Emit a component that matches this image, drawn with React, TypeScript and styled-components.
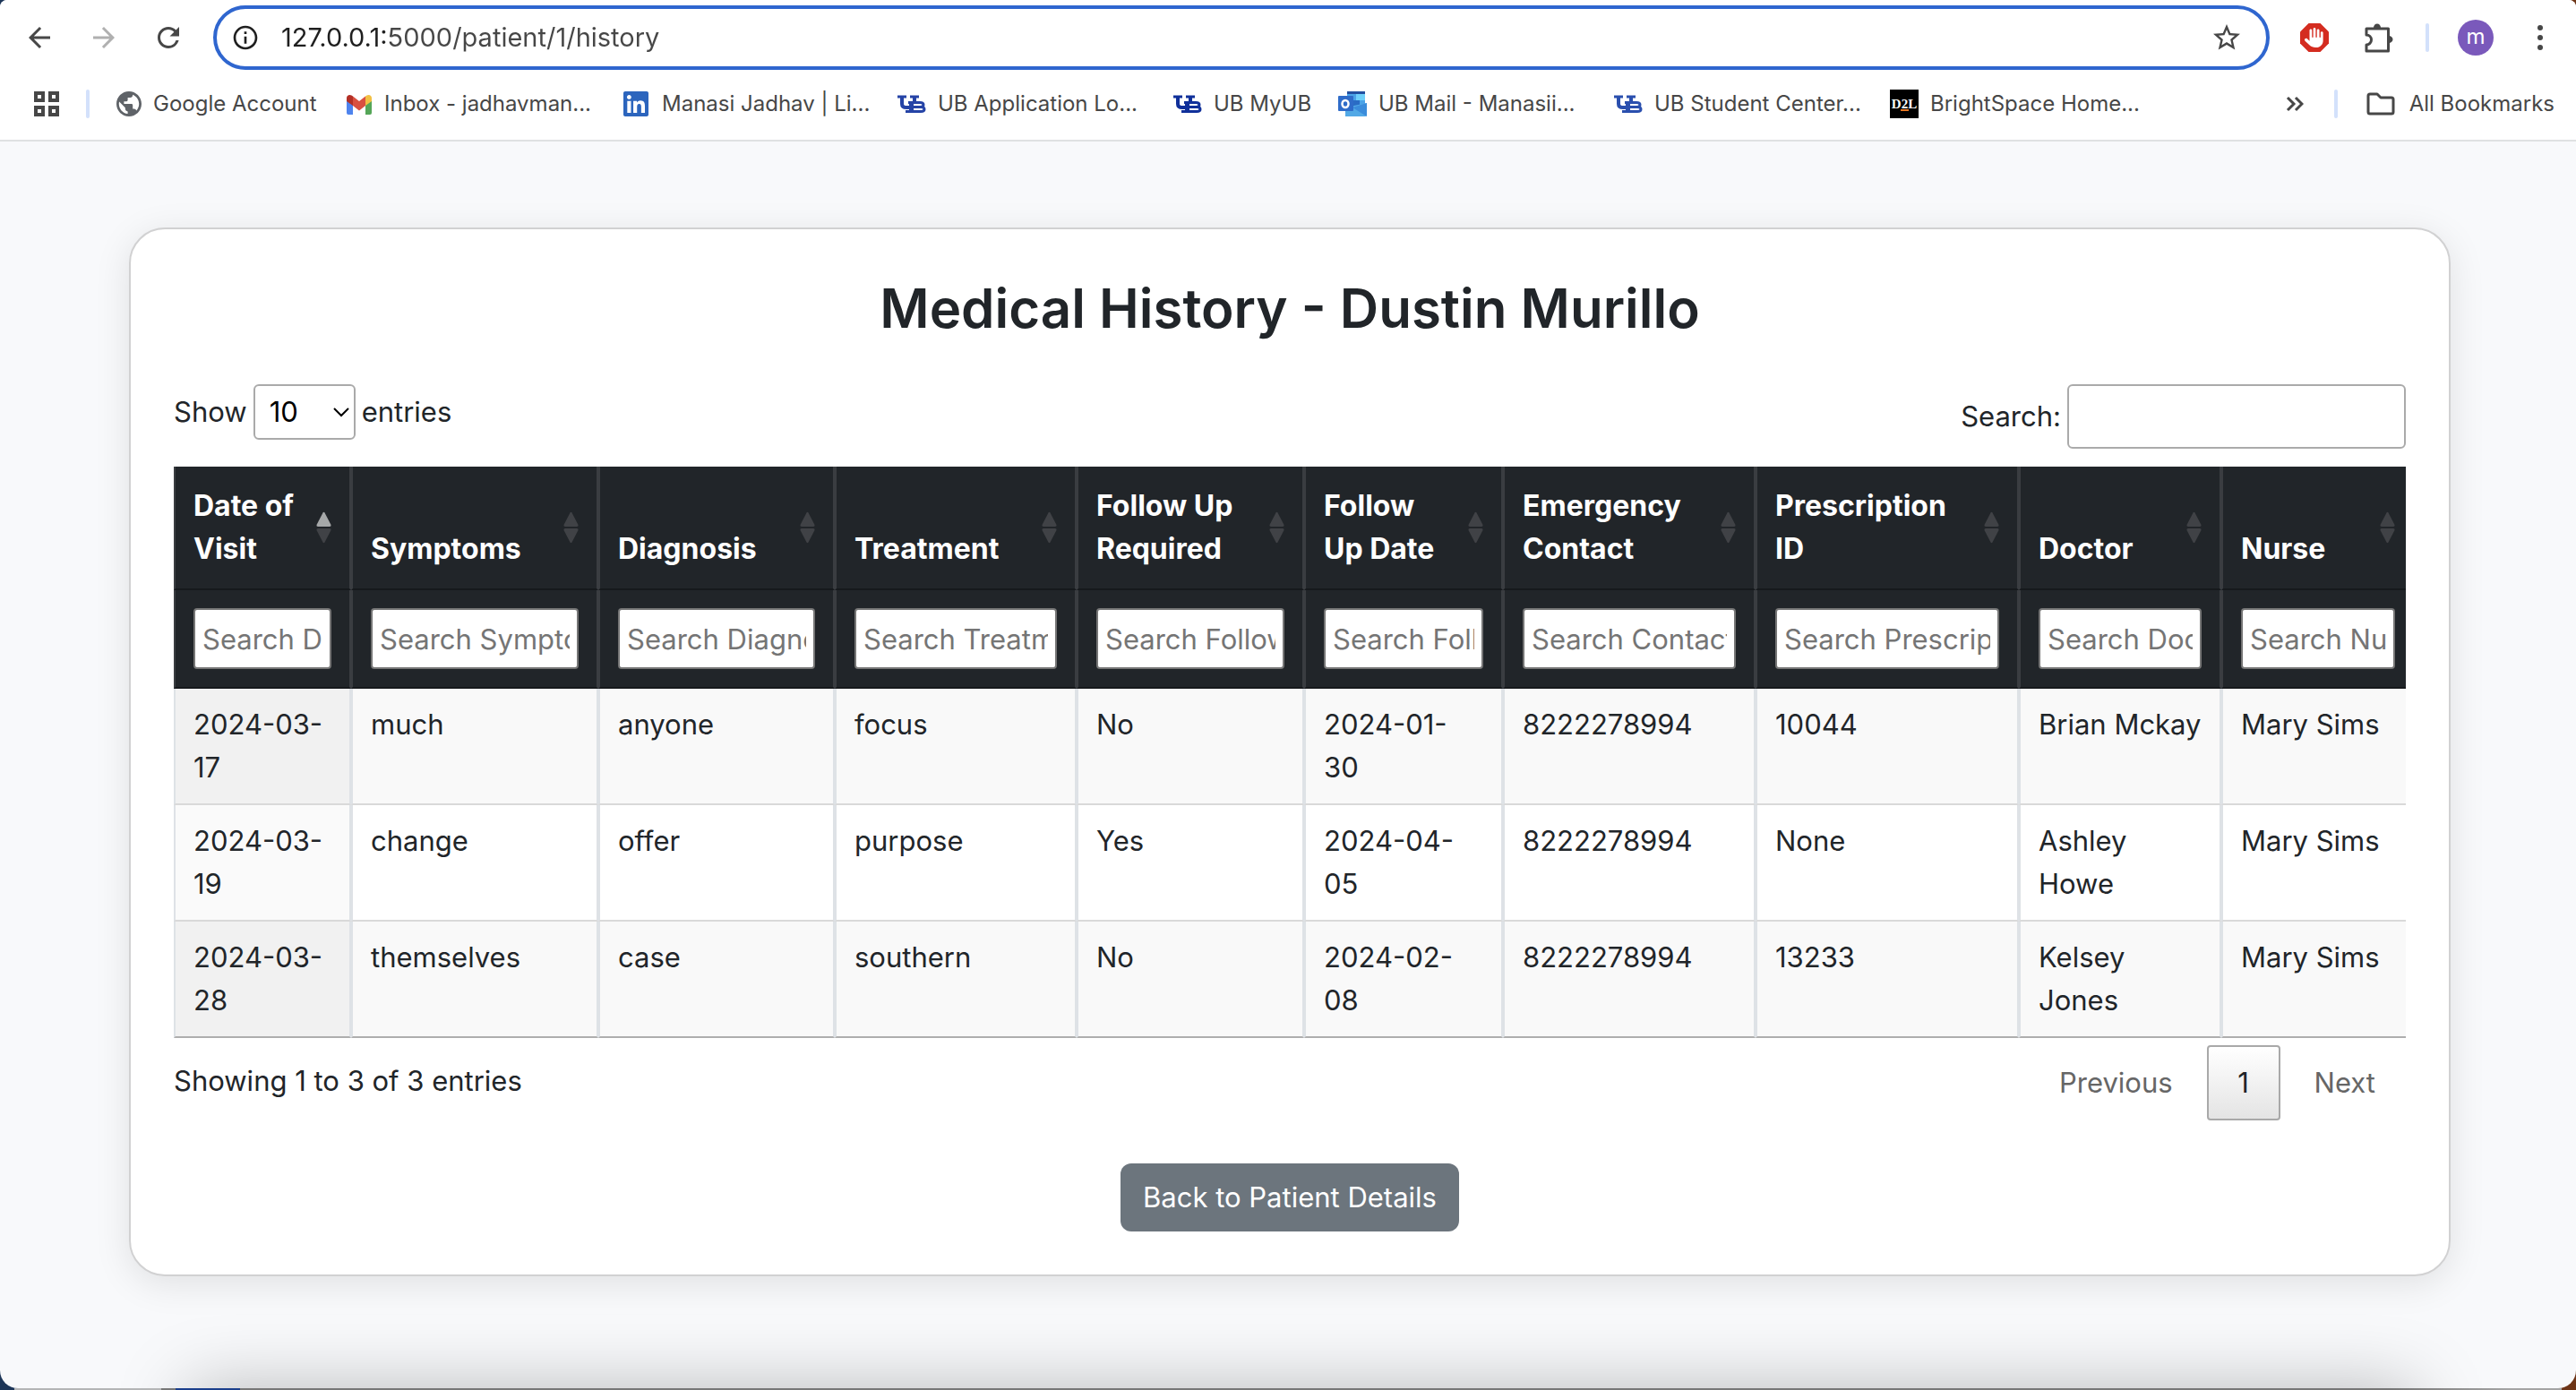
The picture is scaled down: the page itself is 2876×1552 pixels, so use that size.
import React, { useState } from "react";
import styled, { createGlobalStyle, css } from "styled-components";
import { FaHand, FaLinkedin } from "react-icons/fa6";
import {
  MdArrowBack,
  MdArrowForward,
  MdInfoOutline,
  MdPublic,
  MdRefresh,
  MdStarBorder,
} from "react-icons/md";

const GlobalStyle = createGlobalStyle`
  *, *::before, *::after { box-sizing: border-box; }
  body {
    margin: 0;
    background: linear-gradient(to right, #1d3658 50%, #6e3517 50%);
    color: #212529;
    font-family: Inter, "Liberation Sans", sans-serif;
    font-size: 31px;
    line-height: 48px;
  }
  button, input, select { font: inherit; color: inherit; margin: 0; }
  button { cursor: pointer; }
`;

const Desktop = styled.div`
  min-height: 100vh;
  display: flex;
  flex-direction: column;
`;

const BrowserWindow = styled.div`
  flex: 1;
  display: flex;
  flex-direction: column;
  overflow: hidden;
  background: #f8f9fb;
  border-radius: 8px 8px 20px 20px;
`;

const DesktopEdge = styled.div`
  height: 2px;
  margin: 0 16px;
  background: linear-gradient(
    to right,
    #b4b5b6 0 164px,
    #777 164px 180px,
    #1b3f8c 180px 252px,
    #777 252px calc(100% - 190px),
    #a4a4a4 calc(100% - 60px)
  );
`;

/* ---------- Browser chrome ---------- */

const Chrome = styled.header`
  background: #fff;
  border-bottom: 2px solid #dfe1e2;
  color: #474747;
`;

const Toolbar = styled.div`
  display: flex;
  align-items: center;
  height: 84px;
  padding: 0 20px 0 24px;
`;

const IconButton = styled.button<{ $width?: number; $faded?: boolean }>`
  display: flex;
  align-items: center;
  justify-content: center;
  flex: none;
  width: ${(p) => p.$width ?? 40}px;
  height: 40px;
  padding: 0;
  border: 0;
  background: none;
  color: ${(p) => (p.$faded ? "#b0b0b0" : "#474747")};
`;

const NavButtons = styled.nav`
  display: flex;
  gap: 32px;
  margin-right: 30px;
`;

const AddressBar = styled.div`
  flex: 1;
  display: flex;
  align-items: center;
  height: 72px;
  padding: 0 24px 0 16px;
  border: 4px solid #2f66cf;
  border-radius: 36px;
  color: #1f1f1f;
`;

const AddressInput = styled.input`
  flex: 1;
  min-width: 0;
  height: 40px;
  margin-left: 24px;
  padding: 0;
  border: 0;
  outline: 0;
  font-size: 29px;
  line-height: 40px;
  color: transparent;
  background: linear-gradient(to right, #1f1f1f 122px, #474747 122px);
  background-clip: text;
  -webkit-background-clip: text;
`;

const Extensions = styled.div`
  display: flex;
  align-items: center;
  gap: 32px;
  margin-left: 30px;
`;

const Divider = styled.span`
  flex: none;
  width: 4px;
  height: 32px;
  border-radius: 2px;
  background: #d3e1fb;
`;

const Avatar = styled.button`
  flex: none;
  width: 40px;
  height: 40px;
  padding: 0 0 2px;
  border: 0;
  border-radius: 50%;
  background: #7a59bb;
  color: #fff;
  font-size: 24px;
  line-height: 36px;
`;

const BookmarksBar = styled.nav`
  display: flex;
  align-items: center;
  height: 72px;
  padding: 0 24px 8px 38px;
`;

const AppsGroup = styled.div`
  display: flex;
  align-items: center;
  gap: 30px;
`;

const BookmarkList = styled.ul`
  display: flex;
  flex: 1;
  gap: 8px;
  margin: 0 0 0 30px;
  padding: 0;
  list-style: none;
`;

const BookmarkItem = styled.li<{ $width: number }>`
  flex: 0 0 ${(p) => p.$width}px;
`;

const BookmarkLink = styled.a`
  display: flex;
  align-items: center;
  gap: 13px;
  color: #474747;
  font-size: 24px;
  line-height: 32px;
  text-decoration: none;
  white-space: nowrap;

  svg { flex: none; }
`;

const AllBookmarks = styled.button`
  display: flex;
  align-items: center;
  gap: 16px;
  margin-left: 32px;
  padding: 0;
  border: 0;
  background: none;
  font-size: 24px;
  line-height: 32px;
  white-space: nowrap;
`;

/* ---------- Page ---------- */

const Page = styled.main`
  flex: 1;
  display: flex;
  flex-direction: column;
  padding: 96px 140px 0 144px;
`;

const Card = styled.section`
  padding: 48px;
  border: 2px solid #d1d1d2;
  border-radius: 40px;
  background: #fff;
  box-shadow: 0 8px 40px rgba(0, 0, 0, 0.1);
`;

const Title = styled.h1`
  margin: 0 0 45px;
  font-size: 60px;
  font-weight: 600;
  line-height: 80px;
  text-align: center;
`;

const Controls = styled.div`
  display: flex;
  justify-content: space-between;
  align-items: flex-start;
  margin-bottom: 20px;
`;

const ControlLabel = styled.label`
  display: flex;
  align-items: center;
  gap: 7px;
`;

const SelectBox = styled.span`
  position: relative;
  display: block;

  svg {
    position: absolute;
    right: 7px;
    top: 24px;
    pointer-events: none;
  }
`;

const LengthSelect = styled.select`
  display: block;
  appearance: none;
  width: 114px;
  height: 62px;
  padding: 0 16px;
  border: 2px solid #aaa;
  border-radius: 6px;
  background: transparent;
  color: #000;
`;

const SearchInput = styled.input`
  width: 378px;
  height: 72px;
  padding: 10px;
  border: 2px solid #aaa;
  border-radius: 6px;
  background: transparent;
`;

const TableClip = styled.div`
  overflow: hidden;
`;

const HistoryTable = styled.table`
  width: calc(100% + 10px);
  table-layout: fixed;
  border-collapse: separate;
  border-spacing: 0;
`;

const HeaderCell = styled.th`
  padding: 20px;
  border: 0 solid #3a3d41;
  border-width: 0 2px;
  border-bottom: 2px solid #16191c;
  background: #212529;
  color: #fff;
  font-size: 32px;
  font-weight: 700;
  text-align: left;
  vertical-align: bottom;
`;

const FilterCell = styled.td`
  padding: 20px;
  border: 0 solid #3a3d41;
  border-width: 0 2px;
  border-bottom: 2px solid #16191c;
  background: #212529;
`;

const SortButton = styled.button`
  display: flex;
  align-items: flex-end;
  justify-content: space-between;
  gap: 16px;
  width: 100%;
  height: 96px;
  padding: 0;
  border: 0;
  background: none;
  text-align: left;

  svg {
    flex: none;
    align-self: center;
  }
`;

const FilterInput = styled.input`
  display: block;
  width: 100%;
  height: 68px;
  padding: 0 8px;
  border: 2px solid #767676;
  border-radius: 4px;
  background: #fff;
  color: #212529;

  &::placeholder { color: #757575; opacity: 1; }
`;

const DataCell = styled.td<{ $striped: boolean; $sorted: boolean; $last: boolean }>`
  padding: 16px 18px 16px 20px;
  border: 0 solid #dee2e6;
  border-width: 0 2px;
  border-bottom: 2px solid ${(p) => (p.$last ? "#aeaeae" : "#d9d9d9")};
  vertical-align: top;
  ${(p) =>
    p.$striped
      ? css`background: ${p.$sorted ? "#f1f1f1" : "#f9f9f9"};`
      : css`background: ${p.$sorted ? "#fafafa" : "#fff"};`}
`;

const DateValue = styled.time`
  display: block;
  max-width: 160px;
`;

const TableFooter = styled.div`
  display: flex;
  justify-content: space-between;
  align-items: flex-start;
  padding-top: 8px;
`;

const Info = styled.p`
  margin: 0;
  padding-top: 16px;
`;

const Pagination = styled.nav`
  display: flex;
  gap: 4px;
`;

const PageButton = styled.button<{ $current?: boolean }>`
  height: 84px;
  padding: 0 32px;
  border: 2px solid transparent;
  border-radius: 4px;
  background: transparent;
  color: #666;
  ${(p) =>
    p.$current &&
    css`
      width: 82px;
      padding: 0;
      border-color: #a9a9a9;
      background: linear-gradient(to bottom, #fff, #e4e4e4);
      color: #212529;
    `}
`;

const Actions = styled.div`
  display: flex;
  justify-content: center;
  padding-top: 48px;
`;

const BackLink = styled.a`
  padding: 14px 25px;
  border-radius: 12px;
  background: #6c757d;
  color: #fff;
  text-decoration: none;
`;

const BottomShade = styled.div`
  flex: none;
  height: 200px;
  margin: 0 180px -200px 210px;
  box-shadow: 0 0 80px rgba(0, 0, 0, 0.26);
`;

/* ---------- Icons ---------- */

const AppsIcon = () => (
  <svg width="28" height="28" viewBox="0 0 28 28" fill="none" stroke="currentColor" strokeWidth="4">
    <rect x="2" y="2" width="8" height="8" />
    <rect x="18" y="2" width="8" height="8" />
    <rect x="2" y="18" width="8" height="8" />
    <rect x="18" y="18" width="8" height="8" />
  </svg>
);

const GmailIcon = () => (
  <svg width="30" height="28" viewBox="0 0 30 28">
    <path d="M1 8v16a2 2 0 0 0 2 2h5V12z" fill="#4f84ee" />
    <path d="M29 8v16a2 2 0 0 1-2 2h-5V12z" fill="#55a658" />
    <path d="M22 5.500l1.500-1C26 3 29 4.500 29 7.500V11l-7 5z" fill="#f2c043" />
    <path d="M8 5.500L6.500 4.500C4 3 1 4.500 1 7.500V11l7 5z" fill="#b33026" />
    <path d="M8 5.500l7 5.500 7-5.500V16l-7 5.500L8 16z" fill="#d95040" />
  </svg>
);

/* University monogram: two interlocking slab shapes */
const UbIcon = ({ color = "#10309a" }: { color?: string }) => (
  <svg width="32" height="24" viewBox="0 0 32 24" fill="none" stroke={color}>
    <path d="M0 4h10M14 4h10" strokeWidth="3" />
    <path d="M5 4v8q0 4 5 4h5q4 0 4-4V4" strokeWidth="4" />
    <path d="M13 9h13q6 0 5 4.500Q33 22 26 22H9v-3h4z" fill="#fff" stroke="none" />
    <path d="M9 20.500h17q4 0 4-2.500t-4-2.500h-9M12 10.500h13q4 0 4 2.500t-4 2.500" strokeWidth="3" />
    <path d="M15.500 10v11" strokeWidth="5" />
    <path d="M19 3v7" strokeWidth="4" />
  </svg>
);

const OutlookIcon = () => (
  <svg width="32" height="28" viewBox="0 0 32 28">
    <path d="M10 0h20v8H10z" fill="#2350a0" />
    <path d="M10 3h20v16H10z" fill="#4aa3e8" />
    <path d="M20 3h10v7H20z" fill="#6fd0fa" />
    <path d="M16 10h8v9h-8z" fill="#2a6cc4" />
    <path d="M8 18L32 13v13a2 2 0 0 1-2 2H8z" fill="#52a9e6" />
    <path d="M32 13v15L16 18z" fill="#3b8cdb" />
    <rect x="0" y="5" width="17" height="17" rx="1" fill="#2f6cc9" />
    <ellipse cx="8" cy="14" rx="3.500" ry="4" fill="none" stroke="#fff" strokeWidth="2.500" />
  </svg>
);

const D2lIcon = () => (
  <svg width="32" height="32" viewBox="0 0 32 32" fontFamily="Liberation Serif, serif" fontWeight="700" fontSize="15" fill="#fff">
    <rect width="32" height="32" fill="#000" />
    <text x="16" y="21" textAnchor="middle">D2L</text>
    <rect x="12" y="22" width="9" height="2" fill="#e87722" />
  </svg>
);

const AdBlockIcon = () => (
  <svg width="32" height="32" viewBox="0 0 32 32">
    <path d="M9.500 0h13L32 9.500v13L22.500 32h-13L0 22.500v-13z" fill="#d42c20" />
    <FaHand x={5} y={5} size={22} color="#fff" />
  </svg>
);

const PuzzleIcon = () => (
  <svg width="36" height="36" viewBox="0 0 36 36" fill="none" stroke="currentColor" strokeWidth="3" strokeLinejoin="round">
    <path d="M4 8h24.500v25H4v-7a5.500 5.500 0 0 0 0-11z" />
    <path d="M12 7a4 4.500 0 0 1 8 0zM29 16a4.500 4 0 0 1 0 8z" fill="currentColor" stroke="none" />
  </svg>
);

const MenuIcon = () => (
  <svg width="8" height="28" viewBox="0 0 8 28" fill="currentColor">
    <circle cx="4" cy="3" r="3" />
    <circle cx="4" cy="14" r="3" />
    <circle cx="4" cy="25" r="3" />
  </svg>
);

const MoreIcon = () => (
  <svg width="20" height="18" viewBox="0 0 20 18" fill="none" stroke="currentColor" strokeWidth="3">
    <path d="M2 2l7 7-7 7M11 2l7 7-7 7" />
  </svg>
);

const FolderIcon = () => (
  <svg width="32" height="26" viewBox="0 0 32 26" fill="none" stroke="currentColor" strokeWidth="3" strokeLinejoin="round">
    <path d="M2 4a2 2 0 0 1 2-2h8l4 4h12a2 2 0 0 1 2 2v14a2 2 0 0 1-2 2H4a2 2 0 0 1-2-2z" />
  </svg>
);

const SelectChevron = () => (
  <svg width="18" height="14" viewBox="0 0 18 14" fill="none" stroke="#000" strokeWidth="2">
    <path d="M1 3l8 8 8-8" />
  </svg>
);

const SortIcon = ({ ascending }: { ascending: boolean }) => (
  <svg width="17" height="36" viewBox="0 0 17 36">
    <path d="M7.500 1.500Q8.500 0 9.500 1.500L16.500 15Q17 17 15 17H2Q0 17 .5 15z" fill={ascending ? "#a6a8a9" : "#404246"} />
    <path d="M7.500 34.500Q8.500 36 9.500 34.500L16.500 21Q17 19 15 19H2Q0 19 .5 21z" fill="#404246" />
  </svg>
);

/* ---------- Data ---------- */

const bookmarks: { label: string; icon: React.ReactNode; width: number }[] = [
  { label: "Google Account", icon: <MdPublic viewBox="2 2 20 20" size={28} color="#5f6368" />, width: 248 },
  { label: "Inbox - jadhavman...", icon: <GmailIcon />, width: 300 },
  { label: "Manasi Jadhav | Li...", icon: <FaLinkedin size={32} color="#2c65bd" />, width: 300 },
  { label: "UB Application Lo...", icon: <UbIcon color="#2543a6" />, width: 300 },
  { label: "UB MyUB", icon: <UbIcon />, width: 176 },
  { label: "UB Mail - Manasii...", icon: <OutlookIcon />, width: 300 },
  { label: "UB Student Center...", icon: <UbIcon color="#2a4fae" />, width: 300 },
  { label: "BrightSpace Home...", icon: <D2lIcon />, width: 300 },
];

const columns = [
  { title: "Date of Visit", filter: "Search Date", width: 198 },
  { title: "Symptoms", filter: "Search Symptoms", width: 276 },
  { title: "Diagnosis", filter: "Search Diagnosis", width: 264 },
  { title: "Treatment", filter: "Search Treatment", width: 270 },
  { title: "Follow Up Required", filter: "Search Follow Up", width: 254 },
  { title: "Follow Up Date", filter: "Search Follow Up Date", width: 222 },
  { title: "Emergency Contact", filter: "Search Contact", width: 282 },
  { title: "Prescription ID", filter: "Search Prescription", width: 294 },
  { title: "Doctor", filter: "Search Doctor", width: 226 },
  { title: "Nurse", filter: "Search Nurse", width: 216 },
];

const dateColumns = [0, 5];

const visits = [
  ["2024-03-17", "much", "anyone", "focus", "No", "2024-01-30", "8222278994", "10044", "Brian Mckay", "Mary Sims"],
  ["2024-03-19", "change", "offer", "purpose", "Yes", "2024-04-05", "8222278994", "None", "Ashley Howe", "Mary Sims"],
  ["2024-03-28", "themselves", "case", "southern", "No", "2024-02-08", "8222278994", "13233", "Kelsey Jones", "Mary Sims"],
];

/* ---------- Sections ---------- */

function BrowserChrome() {
  const [address, setAddress] = useState("127.0.0.1:5000/patient/1/history");
  return (
    <Chrome>
      <Toolbar>
        <NavButtons aria-label="Navigation">
          <IconButton aria-label="Back"><MdArrowBack size={36} /></IconButton>
          <IconButton $faded aria-label="Forward"><MdArrowForward size={36} /></IconButton>
          <IconButton aria-label="Reload"><MdRefresh size={36} /></IconButton>
        </NavButtons>
        <AddressBar>
          <MdInfoOutline size={32} />
          <AddressInput aria-label="Address" value={address} onChange={(e) => setAddress(e.target.value)} />
          <IconButton aria-label="Bookmark this tab"><MdStarBorder size={36} /></IconButton>
        </AddressBar>
        <Extensions>
          <IconButton aria-label="Ad blocker"><AdBlockIcon /></IconButton>
          <IconButton aria-label="Extensions"><PuzzleIcon /></IconButton>
          <Divider />
          <Avatar aria-label="Profile">m</Avatar>
          <IconButton aria-label="Menu"><MenuIcon /></IconButton>
        </Extensions>
      </Toolbar>
      <BookmarksBar aria-label="Bookmarks">
        <AppsGroup>
          <IconButton $width={28} aria-label="Apps"><AppsIcon /></IconButton>
          <Divider />
        </AppsGroup>
        <BookmarkList>
          {bookmarks.map((b) => (
            <BookmarkItem key={b.label} $width={b.width}>
              <BookmarkLink href="#">{b.icon}{b.label}</BookmarkLink>
            </BookmarkItem>
          ))}
        </BookmarkList>
        <IconButton $width={88} aria-label="More bookmarks"><MoreIcon /></IconButton>
        <Divider />
        <AllBookmarks><FolderIcon />All Bookmarks</AllBookmarks>
      </BookmarksBar>
    </Chrome>
  );
}

function MedicalHistory() {
  return (
    <Card>
      <Title>Medical History - Dustin Murillo</Title>
      <Controls>
        <ControlLabel>
          Show
          <SelectBox>
            <LengthSelect defaultValue="10">
              <option>10</option>
              <option>25</option>
              <option>50</option>
              <option>100</option>
            </LengthSelect>
            <SelectChevron />
          </SelectBox>
          entries
        </ControlLabel>
        <ControlLabel>
          Search:
          <SearchInput type="search" />
        </ControlLabel>
      </Controls>
      <TableClip>
        <HistoryTable>
          <colgroup>
            {columns.map((c) => <col key={c.title} style={{ width: c.width }} />)}
          </colgroup>
          <thead>
            <tr>
              {columns.map((c, i) => (
                <HeaderCell key={c.title} scope="col">
                  <SortButton>{c.title}<SortIcon ascending={i === 0} /></SortButton>
                </HeaderCell>
              ))}
            </tr>
            <tr>
              {columns.map((c) => (
                <FilterCell key={c.title}>
                  <FilterInput aria-label={c.filter} placeholder={c.filter} />
                </FilterCell>
              ))}
            </tr>
          </thead>
          <tbody>
            {visits.map((row, r) => (
              <tr key={row[0]}>
                {row.map((value, c) => (
                  <DataCell key={c} $striped={r % 2 === 0} $sorted={c === 0} $last={r === visits.length - 1}>
                    {dateColumns.includes(c) ? <DateValue>{value}</DateValue> : value}
                  </DataCell>
                ))}
              </tr>
            ))}
          </tbody>
        </HistoryTable>
      </TableClip>
      <TableFooter>
        <Info>Showing 1 to 3 of 3 entries</Info>
        <Pagination aria-label="Table pages">
          <PageButton>Previous</PageButton>
          <PageButton $current>1</PageButton>
          <PageButton>Next</PageButton>
        </Pagination>
      </TableFooter>
      <Actions>
        <BackLink href="#">Back to Patient Details</BackLink>
      </Actions>
    </Card>
  );
}

export default function App() {
  return (
    <>
      <GlobalStyle />
      <Desktop>
        <BrowserWindow>
          <BrowserChrome />
          <Page>
            <MedicalHistory />
          </Page>
          <BottomShade />
        </BrowserWindow>
        <DesktopEdge />
      </Desktop>
    </>
  );
}
